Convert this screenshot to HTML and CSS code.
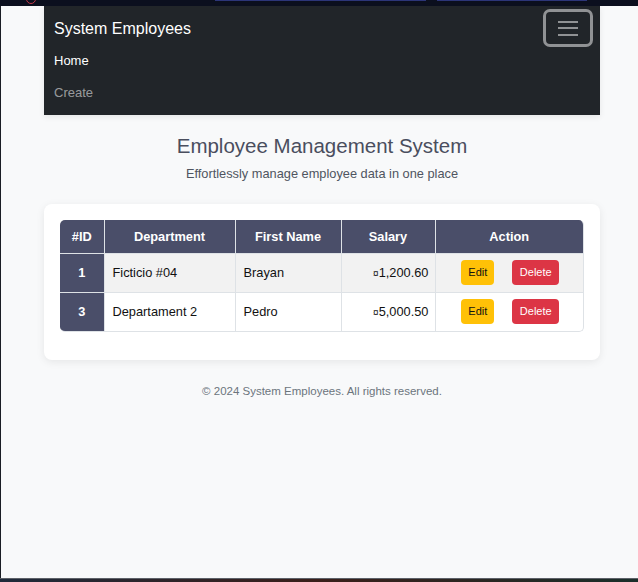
FILE: index.html
```html
<!DOCTYPE html>
<html lang="en">
<head>
<meta charset="utf-8">
<title>System Employees</title>
<link rel="stylesheet" href="styles.css">
</head>
<body>
<div class="screen">
  <div class="topstrip">
    <span class="dot"></span>
    <span class="tab tab-a"></span>
    <span class="tab tab-b"></span>
  </div>
  <div class="page">
    <nav class="navbar">
      <div class="nav-top">
        <a class="brand" href="#">System Employees</a>
        <button class="toggler" type="button" aria-label="Toggle navigation">
          <span class="bar"></span><span class="bar"></span><span class="bar"></span>
        </button>
      </div>
      <ul class="nav-list">
        <li><a class="nav-link active" href="#">Home</a></li>
        <li><a class="nav-link" href="#">Create</a></li>
      </ul>
    </nav>

    <header class="hero">
      <h1 class="title">Employee Management System</h1>
      <p class="subtitle">Effortlessly manage employee data in one place</p>
    </header>

    <section class="card">
      <div class="table-wrap">
        <table class="emp-table">
          <colgroup>
            <col class="c-id"><col class="c-dept"><col class="c-name"><col class="c-sal"><col class="c-act">
          </colgroup>
          <thead>
            <tr><th>#ID</th><th>Department</th><th>First Name</th><th>Salary</th><th>Action</th></tr>
          </thead>
          <tbody>
            <tr class="odd">
              <td class="id">1</td><td>Ficticio #04</td><td>Brayan</td>
              <td class="sal"><span class="cur">¤</span>1,200.60</td>
              <td class="act"><button class="btn btn-edit">Edit</button><button class="btn btn-del">Delete</button></td>
            </tr>
            <tr>
              <td class="id">3</td><td>Departament 2</td><td>Pedro</td>
              <td class="sal"><span class="cur">¤</span>5,000.50</td>
              <td class="act"><button class="btn btn-edit">Edit</button><button class="btn btn-del">Delete</button></td>
            </tr>
          </tbody>
        </table>
      </div>
    </section>

    <footer class="footer">© 2024 System Employees. All rights reserved.</footer>
  </div>
  <div class="bottomstrip"></div>
</div>
</body>
</html>
```
FILE: styles.css
```css
* { box-sizing: border-box; }
html, body { margin: 0; padding: 0; }
body {
  font-family: "Liberation Sans", Arial, sans-serif;
  background: #f8f9fa;
  color: #212529;
}
.screen {
  height: 582px;
  display: flex;
  flex-direction: column;
  overflow: hidden;
}
.topstrip {
  height: 6px;
  flex: none;
  background: #0b0f1e;
  position: relative;
}
.dot {
  position: absolute;
  left: 26px; top: -6px;
  width: 10px; height: 10px;
  border-radius: 50%;
  border: 1.5px solid #c0394a;
}
.tab {
  position: absolute;
  top: 0;
  height: 1px;
  background: #2c3578;
}
.tab-a { left: 215px; width: 211px; }
.tab-b { left: 437px; width: 150px; }
.page {
  flex: 1;
  background: #f8f9fa;
  border-left: 1px solid #1a1d24;
  padding-left: 43px;
  display: flex;
  flex-direction: column;
}
.navbar {
  width: 556px;
  background: #212529;
  padding: 3px 7px 6px 10px;
  box-shadow: 0 2px 6px rgba(0,0,0,.08);
}
.nav-top {
  height: 36px;
  display: flex;
  justify-content: space-between;
  align-items: flex-start;
}
.brand {
  color: #fff;
  text-decoration: none;
  font-size: 16px;
  line-height: 38px;
  padding-top: 1px;
}
.toggler {
  width: 50px;
  height: 38px;
  background: transparent;
  border: 3px solid rgba(255,255,255,.5);
  border-radius: 7px;
  padding: 0;
  display: flex;
  flex-direction: column;
  align-items: center;
  justify-content: center;
  gap: 4.5px;
}
.bar {
  display: block;
  width: 20px;
  height: 2px;
  background: rgba(255,255,255,.5);
}
.nav-list {
  list-style: none;
  margin: 0;
  padding: 0;
}
.nav-link {
  display: block;
  font-size: 13px;
  line-height: 16px;
  padding: 8px 0;
  color: rgba(255,255,255,.55);
  text-decoration: none;
}
.nav-link.active { color: #fff; }

.hero {
  width: 556px;
  text-align: center;
  padding-top: 19px;
}
.title {
  margin: 0;
  font-size: 20.5px;
  line-height: 24px;
  font-weight: normal;
  color: #4a4e5e;
}
.subtitle {
  margin: 8px 0 0;
  font-size: 12.8px;
  line-height: 15px;
  color: #4f5560;
}
.card {
  width: 556px;
  margin-top: 23px;
  background: #fff;
  border-radius: 8px;
  box-shadow: 0 2px 8px rgba(0,0,0,.08);
  padding: 16px 16px 28px;
}
.table-wrap {
  border-radius: 5px;
  overflow: hidden;
  border-bottom: 1px solid #dee2e6;
  border-right: 1px solid #dee2e6;
}
.emp-table {
  width: 523px;
  border-collapse: collapse;
  table-layout: fixed;
  font-size: 12.8px;
}
.c-id { width: 44px; }
.c-dept { width: 131px; }
.c-name { width: 106px; }
.c-sal { width: 94px; }
.c-act { width: 148px; }
.emp-table th {
  background: #4a4e69;
  color: #fff;
  font-weight: bold;
  height: 33px;
  text-align: center;
  border-left: 1px solid #dee2e6;
  padding: 0 8px;
}
.emp-table th:first-child { border-left: none; }
.emp-table td {
  height: 39px;
  padding: 0 8px;
  border-top: 1px solid #dee2e6;
  border-left: 1px solid #dee2e6;
  color: #111;
}
.emp-table tr.odd td { background: #f2f2f2; }
.emp-table td.id {
  background: #4a4e69 !important;
  color: #fff;
  font-weight: bold;
  text-align: center;
  border-left: none;
}
.emp-table td.sal { text-align: right; padding-right: 6px; }
.cur { font-size: 10px; }
.emp-table td.act { text-align: center; padding: 0 0 0 2px; }
.btn {
  font-family: "Liberation Sans", Arial, sans-serif;
  font-size: 11px;
  line-height: 17px;
  padding: 4px 7px;
  border: none;
  border-radius: 4px;
  vertical-align: middle;
}
.btn-edit { background: #ffc107; color: #111; }
.btn-del { background: #dc3545; color: #fff; margin-left: 18px; padding: 4px 7.5px; }

.footer {
  width: 556px;
  text-align: center;
  margin-top: 24px;
  font-size: 11.5px;
  line-height: 14px;
  color: #6c757d;
}
.bottomstrip {
  height: 4px;
  flex: none;
  border-top: 1px solid #5d6168;
  background: linear-gradient(90deg, #1f2a3a, #3a1f1a 50%, #1a2e2a);
}
```
